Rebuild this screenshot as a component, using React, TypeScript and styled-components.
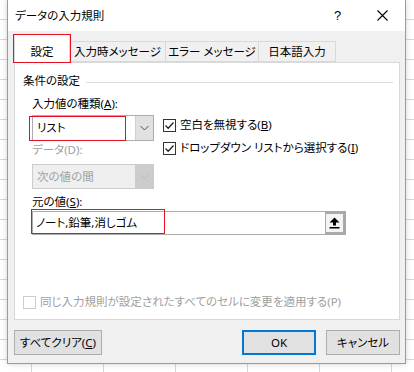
import React from "react";
import styled, { createGlobalStyle } from "styled-components";

const GlobalStyle = createGlobalStyle`
  html, body {
    margin: 0;
    padding: 0;
  }
  body {
    width: 414px;
    height: 372px;
    overflow: hidden;
    background-color: #ffffff;
    background-image:
      repeating-linear-gradient(to bottom, transparent 0 19px, #d8d8d8 19px 20px),
      repeating-linear-gradient(to right, transparent 0 31px, #d8d8d8 31px 32px, transparent 32px 72px);
    font-family: "Noto Sans", "Noto Sans CJK JP", sans-serif;
    font-feature-settings: "palt";
    font-size: 11.5px;
    color: #000;
  }
`;

const Dialog = styled.div`
  box-sizing: border-box;
  margin-left: 7px;
  width: 399px;
  height: 364px;
  border: 1px solid #6aa7e2;
  border-top: none;
  background: #f0f0f0;
  display: flex;
  flex-direction: column;
  box-shadow: 0 0 6px rgba(0, 0, 0, 0.18);
`;

const TitleBar = styled.div`
  height: 31px;
  background: #ffffff;
  display: flex;
  align-items: center;
`;

const TitleText = styled.div`
  flex: 1;
  padding-left: 7px;
  line-height: 16px;
  padding-top: 1px;
`;

const TitleButton = styled.div`
  width: 45px;
  height: 31px;
  display: flex;
  align-items: center;
  justify-content: center;
  font-size: 13px;
  font-family: "Liberation Sans", sans-serif;
`;

const Body = styled.div`
  padding: 3px 5px 0 6px;
  display: flex;
  flex-direction: column;
`;

const TabStrip = styled.div`
  height: 28px;
  display: flex;
  align-items: flex-end;
  position: relative;
  z-index: 1;
`;

const Tab = styled.div<{ $active?: boolean; $w: number }>`
  box-sizing: border-box;
  width: ${(p) => p.$w}px;
  height: ${(p) => (p.$active ? 29 : 21)}px;
  margin-bottom: ${(p) => (p.$active ? -1 : 0)}px;
  background: ${(p) => (p.$active ? "#ffffff" : "#f0f0f0")};
  border: 1px solid #d9d9d9;
  border-bottom: ${(p) => (p.$active ? "none" : "1px solid #d9d9d9")};
  border-left: ${(p) => (p.$active ? "1px solid #d9d9d9" : "none")};
  display: flex;
  align-items: center;
  justify-content: center;
  padding-top: ${(p) => (p.$active ? 6 : 0)}px;
  line-height: 16px;
  white-space: nowrap;
  position: relative;
`;

const RedMark = styled.div<{ $l: number; $t: number; $w: number; $h: number }>`
  position: absolute;
  left: ${(p) => p.$l}px;
  top: ${(p) => p.$t}px;
  width: ${(p) => p.$w}px;
  height: ${(p) => p.$h}px;
  box-sizing: border-box;
  border: 1px solid #e81123;
  pointer-events: none;
  z-index: 3;
`;

const Panel = styled.div`
  box-sizing: border-box;
  height: 258px;
  background: #ffffff;
  border: 1px solid #d9d9d9;
  padding-top: 10px;
  display: flex;
  flex-direction: column;
`;

const SectionHeader = styled.div`
  margin-left: 8px;
  margin-right: 6px;
  height: 16px;
  display: flex;
  align-items: center;
  gap: 6px;
  line-height: 16px;
  &::after {
    content: "";
    flex: 1;
    height: 1px;
    background: #dcdcdc;
    margin-top: 2px;
  }
`;

const Group = styled.div`
  padding-left: 17px;
  display: grid;
  grid-template-columns: 122px 1fr;
  column-gap: 9px;
  align-items: start;
`;

const Label = styled.div<{ $mt: number; $disabled?: boolean; $narrow?: boolean }>`
  grid-column: ${(p) => (p.$narrow ? "1" : "1 / span 2")};
  margin-top: ${(p) => p.$mt}px;
  height: 16px;
  line-height: 16px;
  color: ${(p) => (p.$disabled ? "#a0a0a0" : "#000")};
`;

const Combo = styled.div<{ $disabled?: boolean; $h: number; $mt: number }>`
  grid-column: 1;
  position: relative;
  box-sizing: border-box;
  margin-top: ${(p) => p.$mt}px;
  width: 122px;
  height: ${(p) => p.$h}px;
  border: 1px solid ${(p) => (p.$disabled ? "#cccccc" : "#adadad")};
  background: ${(p) => (p.$disabled ? "#efefef" : "#ffffff")};
  display: flex;
  color: ${(p) => (p.$disabled ? "#a0a0a0" : "#000")};
`;

const ComboText = styled.div`
  flex: 1;
  display: flex;
  align-items: center;
  padding-left: 4px;
  line-height: 16px;
`;

const ComboButton = styled.div<{ $disabled?: boolean }>`
  width: 17px;
  background: ${(p) => (p.$disabled ? "#cccccc" : "#e1e1e1")};
  border-left: 1px solid ${(p) => (p.$disabled ? "#cccccc" : "#d0d0d0")};
  display: flex;
  align-items: center;
  justify-content: center;
`;

const CheckColumn = styled.div`
  grid-column: 2;
  grid-row: 2 / span 2;
  margin-top: 5px;
  display: flex;
  flex-direction: column;
  gap: 7px;
`;

const CheckItem = styled.label<{ $disabled?: boolean }>`
  display: flex;
  align-items: center;
  gap: 4px;
  height: 16px;
  line-height: 16px;
  white-space: nowrap;
  color: ${(p) => (p.$disabled ? "#a0a0a0" : "#000")};
`;

const CheckBox = styled.span<{ $disabled?: boolean }>`
  box-sizing: border-box;
  width: 13px;
  height: 13px;
  flex: none;
  border: 1px solid ${(p) => (p.$disabled ? "#cccccc" : "#333333")};
  background: #ffffff;
  display: flex;
  align-items: center;
  justify-content: center;
`;

const SourceField = styled.div`
  grid-column: 1 / span 2;
  position: relative;
  margin-top: 1px;
  box-sizing: border-box;
  width: 314px;
  height: 24px;
  display: flex;
`;

const SourceInput = styled.div`
  flex: 1;
  box-sizing: border-box;
  border: 1px solid #adadad;
  border-right: none;
  background: #fff;
  display: flex;
  align-items: center;
  padding-left: 3px;
  line-height: 16px;
`;

const RefButton = styled.div`
  box-sizing: border-box;
  width: 21px;
  height: 24px;
  border: 3px solid #a9a9a9;
  border-left: 1px solid #a9a9a9;
  background: #f4f4f4;
  display: flex;
  align-items: center;
  justify-content: center;
`;

const ApplyAll = styled.div`
  margin-top: 59px;
  margin-left: 8px;
`;

const Footer = styled.div`
  margin-top: 10px;
  display: flex;
  align-items: center;
`;

const Button = styled.div<{ $w: number; $primary?: boolean }>`
  box-sizing: border-box;
  width: ${(p) => p.$w}px;
  height: 25px;
  background: #e1e1e1;
  border: ${(p) => (p.$primary ? "2px solid #0078d7" : "1px solid #adadad")};
  display: flex;
  align-items: center;
  justify-content: center;
  line-height: 16px;
  white-space: nowrap;
`;

const Spacer = styled.div`
  flex: 1;
`;

const ButtonGap = styled.div`
  width: 10px;
`;

const Check = () => (
  <svg width="11" height="11" viewBox="0 0 11 11">
    <path d="M1.5 5.5 L4.2 8.2 L9.5 2.5" fill="none" stroke="#222" strokeWidth="1.3" />
  </svg>
);

const Chevron = ({ color }: { color: string }) => (
  <svg width="9" height="6" viewBox="0 0 9 6">
    <path d="M0.5 1 L4.5 5 L8.5 1" fill="none" stroke={color} strokeWidth="1" />
  </svg>
);

const UpArrow = () => (
  <svg width="11" height="12" viewBox="0 0 11 12">
    <path d="M5.5 0.5 L10.5 5.5 L7 5.5 L7 8.5 L4 8.5 L4 5.5 L0.5 5.5 Z" fill="#000" />
    <rect x="0.5" y="10" width="10" height="1.5" fill="#000" />
  </svg>
);

const CloseIcon = () => (
  <svg width="11" height="11" viewBox="0 0 11 11">
    <path d="M0.5 0.5 L10.5 10.5 M10.5 0.5 L0.5 10.5" stroke="#000" strokeWidth="1.1" />
  </svg>
);

export default function App() {
  return (
    <>
      <GlobalStyle />
      <Dialog>
        <TitleBar>
          <TitleText>データの入力規則</TitleText>
          <TitleButton>?</TitleButton>
          <TitleButton>
            <CloseIcon />
          </TitleButton>
        </TitleBar>
        <Body>
          <TabStrip>
            <Tab $active $w={56}>
              設定
              <RedMark $l={-2} $t={-1} $w={58} $h={29} />
            </Tab>
            <Tab $w={96}>入力時メッセージ</Tab>
            <Tab $w={93}>エラー メッセージ</Tab>
            <Tab $w={77}>日本語入力</Tab>
          </TabStrip>
          <Panel>
            <SectionHeader>条件の設定</SectionHeader>
            <Group>
              <Label $mt={7}>
                入力値の種類(<u>A</u>):
              </Label>
              <Combo $h={26} $mt={3}>
                <ComboText>リスト</ComboText>
                <ComboButton>
                  <Chevron color="#555" />
                </ComboButton>
                <RedMark $l={-4} $t={0} $w={97} $h={25} />
              </Combo>
              <CheckColumn>
                <CheckItem>
                  <CheckBox>
                    <Check />
                  </CheckBox>
                  <span>
                    空白を無視する(<u>B</u>)
                  </span>
                </CheckItem>
                <CheckItem>
                  <CheckBox>
                    <Check />
                  </CheckBox>
                  <span>
                    ドロップダウン リストから選択する(<u>I</u>)
                  </span>
                </CheckItem>
              </CheckColumn>
              <Label $mt={1} $disabled $narrow>
                データ(D):
              </Label>
              <Combo $h={25} $mt={6} $disabled>
                <ComboText>次の値の間</ComboText>
                <ComboButton $disabled>
                  <Chevron color="#b8b8b8" />
                </ComboButton>
              </Combo>
              <Label $mt={5}>
                元の値(<u>S</u>):
              </Label>
              <SourceField>
                <SourceInput>ノート,鉛筆,消しゴム</SourceInput>
                <RefButton>
                  <UpArrow />
                </RefButton>
                <RedMark $l={-1} $t={-2} $w={134} $h={25} />
              </SourceField>
            </Group>
            <ApplyAll>
              <CheckItem $disabled>
                <CheckBox $disabled />
                <span>同じ入力規則が設定されたすべてのセルに変更を適用する(P)</span>
              </CheckItem>
            </ApplyAll>
          </Panel>
          <Footer>
            <Button $w={88}>
              <span>
                すべてクリア(<u>C</u>)
              </span>
            </Button>
            <Spacer />
            <Button $w={74} $primary>
              OK
            </Button>
            <ButtonGap />
            <Button $w={74}>キャンセル</Button>
          </Footer>
        </Body>
      </Dialog>
    </>
  );
}
